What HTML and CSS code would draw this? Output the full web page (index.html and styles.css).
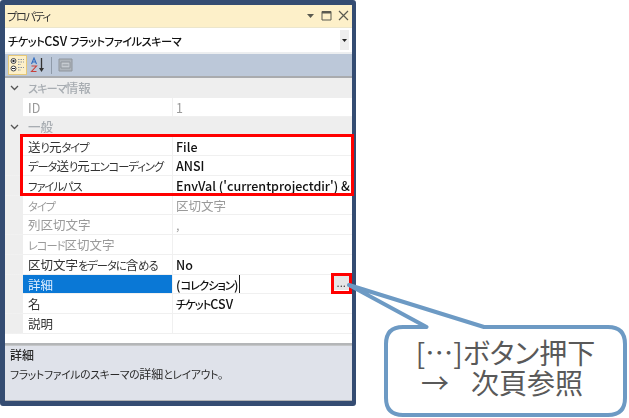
FILE: index.html
```html
<!DOCTYPE html>
<html lang="ja">
<head>
<meta charset="utf-8">
<title>プロパティ</title>
<link rel="stylesheet" href="styles.css">
</head>
<body>
<div class="stage">
  <div class="window">
    <div class="titlebar">
      <span class="title"><span class="k">プロパティ</span></span>
      <div class="title-icons">
        <svg width="9" height="6" viewBox="0 0 9 6"><path d="M1 1h7L4.500 5z" fill="#5a5a50"/></svg>
        <svg width="11" height="11" viewBox="0 0 11 11"><path d="M1 1.500h9v8.500H1z" fill="none" stroke="#5a5a50"/><path d="M1 2.500h9" stroke="#5a5a50" stroke-width="2"/></svg>
        <svg width="11" height="11" viewBox="0 0 11 11"><path d="M1 1l9 9M10 1l-9 9" stroke="#5a5a50" stroke-width="1.200"/></svg>
      </div>
    </div>
    <div class="objectbar">
      <span class="object-name"><span class="k">チケット</span>CSV <span class="k">フラットファイルスキーマ</span></span>
      <span class="object-arrow"><svg width="5" height="3" viewBox="0 0 5 3"><path d="M0 0h5L2.500 3z" fill="#222"/></svg></span>
    </div>
    <div class="toolbar">
      <span class="tool tool-on">
        <svg width="16" height="16" viewBox="0 0 16 16"><circle cx="3.500" cy="4" r="2.500" fill="#fff" stroke="#444"/><circle cx="3.500" cy="11.500" r="2.500" fill="#fff" stroke="#444"/><path d="M2 4h3M3.500 2.800v2.400M2 11.500h3" stroke="#222"/><path d="M8 2.500h6M8 5h6M8 7.500h3M8 10.500h6M8 13h3" stroke="#8a94a0" stroke-dasharray="1.500 1"/></svg>
      </span>
      <span class="tool">
        <svg width="16" height="16" viewBox="0 0 16 16"><path d="M1.500 7L4 1l2.500 6M2.500 5h3" fill="none" stroke="#2f6cc0" stroke-width="1.100"/><path d="M1.500 9h5l-5 5.500h5" fill="none" stroke="#c8403a" stroke-width="1.100"/><path d="M11.500 1v12" stroke="#333" stroke-width="1.300"/><path d="M9 11h5l-2.500 4z" fill="#333"/></svg>
      </span>
      <span class="tool-sep"></span>
      <span class="tool">
        <svg width="15" height="14" viewBox="0 0 15 14"><path d="M1 1h13v12H1z" fill="#aeb4bb" stroke="#8f959c"/><path d="M3 4h9v6H3z" fill="#c6cbd1" stroke="#8f959c"/><path d="M4.500 7h6" stroke="#8f959c"/></svg>
      </span>
    </div>
    <div class="grid">
      <div class="cat"><span class="chev"><svg width="9" height="6" viewBox="0 0 9 6"><path d="M1 1l3.500 3.500L8 1" fill="none" stroke="#555" stroke-width="1.300"/></svg></span><span class="cat-name"><span class="k">スキーマ</span>情報</span></div>
      <div class="row dim"><span class="key">ID</span><span class="val"><span>1</span></span></div>
      <div class="cat"><span class="chev"><svg width="9" height="6" viewBox="0 0 9 6"><path d="M1 1l3.500 3.500L8 1" fill="none" stroke="#555" stroke-width="1.300"/></svg></span><span class="cat-name">一般</span></div>
      <div class="row strong"><span class="key">送<span class="k">り</span>元<span class="k">タイプ</span></span><span class="val"><span>File</span></span></div>
      <div class="row strong"><span class="key"><span class="k">データ</span>送<span class="k">り</span>元<span class="k">エンコーディング</span></span><span class="val"><span>ANSI</span></span></div>
      <div class="row strong"><span class="key"><span class="k">ファイルパス</span></span><span class="val"><span>EnvVal ('currentprojectdir') &amp;</span></span></div>
      <div class="row dim"><span class="key"><span class="k">タイプ</span></span><span class="val"><span>区切文字</span></span></div>
      <div class="row dim"><span class="key">列区切文字</span><span class="val"><span>,</span></span></div>
      <div class="row dim"><span class="key"><span class="k">レコード</span>区切文字</span><span class="val"></span></div>
      <div class="row strong"><span class="key">区切文字<span class="k">をデータに</span>含<span class="k">める</span></span><span class="val"><span>No</span></span></div>
      <div class="row strong selected"><span class="key">詳細</span><span class="val"><span class="caret">(<span class="k">コレクション</span>)</span><span class="ellipsis">...</span></span></div>
      <div class="row strong"><span class="key">名</span><span class="val"><span><span class="k">チケット</span>CSV</span></span></div>
      <div class="row strong"><span class="key">説明</span><span class="val"></span></div>
      <div class="grid-fill"></div>
    </div>
    <div class="desc">
      <div class="desc-title">詳細</div>
      <div class="desc-text"><span class="k">フラットファイルのスキーマの</span>詳細<span class="k">とレイアウト。</span></div>
    </div>
  </div>
  <div class="mark mark-rows"></div>
  <div class="mark mark-btn"></div>
  <svg class="callout" width="629" height="418" viewBox="0 0 629 418">
    <path d="M349 285L426.500 327H403Q386 327 386 344V398Q386 415 403 415H608Q625 415 625 398V344Q625 327 608 327H484Z" fill="#fff" stroke="#6d9ac4" stroke-width="4" stroke-linejoin="round"/>
  </svg>
  <div class="callout-text">
    <div class="callout-line">[…]ボタン押下</div>
    <div class="callout-line callout-next"><span class="arrow">→</span><span>次頁参照</span></div>
  </div>
</div>
</body>
</html>
```
FILE: styles.css
```css
* { box-sizing: border-box; }
html, body { margin: 0; padding: 0; background: #fff; }
body { font-family: "Noto Sans CJK JP", "Open Sans", sans-serif; font-feature-settings: "palt"; }
.stage { position: relative; width: 629px; height: 418px; overflow: hidden; }
.k { font-size: 0.9em; letter-spacing: -1px; }
.window {
  width: 356px; height: 406px; margin: 0;
  border: solid #344c72; border-width: 5px 4px 5px 5px;
  border-radius: 3px;
  background: #fff; display: flex; flex-direction: column;
  filter: blur(0.3px);
}
.titlebar {
  height: 23px; flex: none; display: flex; align-items: center; justify-content: space-between;
  background: #fdf0c9; padding: 0 3px 1px 2px; border-bottom: 1px solid #ece6cc;
}
.title { font-size: 12.500px; color: #333; }
.title .k { letter-spacing: -1.500px; }
.title-icons { display: flex; align-items: center; gap: 6px; }
.objectbar {
  height: 26px; flex: none; display: flex; align-items: center; justify-content: space-between;
  background: #fff; padding: 2px 3px 2px 3px; border-bottom: 2px solid #eceef0;
}
.object-name { font-size: 12.500px; font-weight: 500; color: #111; }
.object-name .k { letter-spacing: -0.500px; }
.object-arrow { width: 9px; height: 20px; background: #eee; display: flex; align-items: center; justify-content: center; }
.toolbar {
  height: 24px; flex: none; display: flex; align-items: center; gap: 1px; padding-left: 3px;
  background: #bcc8d9; border-bottom: 2px solid #a9abae;
}
.tool { width: 19px; height: 20px; display: flex; align-items: center; justify-content: center; }
.tool-on { background: #fdf0c9; border: 1px solid #e6c878; }
.tool-sep { width: 1px; height: 17px; background: #8f9aa8; margin: 0 3px; }
.grid { flex: 1; display: flex; flex-direction: column; background: #fff; font-size: 12.500px; border-bottom: 2px solid #b4b6b8; }
.cat { height: 19.500px; flex: none; display: flex; align-items: center; background: #eeeeee; color: #a8adb2; }
.chev { width: 18px; display: flex; justify-content: center; flex: none; }
.cat-name { font-weight: 500; padding-left: 5px; }
.row {
  height: 19.700px; flex: none; display: flex; padding-left: 18px; background: linear-gradient(#eee, #eee) left / 18px 100% no-repeat;
  line-height: 20px;
}
.key { width: 150px; flex: none; padding-left: 5px; background: #fff; border-bottom: 1px solid #f0f0f0; border-right: 1px solid #f0f0f0; color: #333; white-space: nowrap; overflow: hidden; }
.val { flex: 1; min-width: 0; padding-left: 3px; border-bottom: 1px solid #f0f0f0; white-space: nowrap; overflow: hidden; display: flex; justify-content: space-between; }
.strong .val { font-weight: 500; color: #111; }
.dim .key, .dim .val { color: #9a9a9a; font-weight: 400; }
.selected .key { background: #0a78d6; color: #dfeeff; }
.caret { border-right: 1px solid #222; padding-right: 1px; height: 18px; line-height: 19px; }
.ellipsis { width: 15px; height: 14px; margin: 1px 3px 0 0; background: #e6e6e6; font-weight: 700; font-size: 8px; line-height: 16px; letter-spacing: 0.500px; text-align: center; color: #333; font-feature-settings: normal; }
.grid-fill { flex: 1; background: #fff; }
.desc { height: 56px; flex: none; background: #dfe2ea; padding: 0 5px; border-top: 1px solid #c4c6c8; border-bottom: 1px solid #b0b2b4; color: #2a2a2a; font-size: 12px; line-height: 18.500px; }
.desc-title { font-weight: 500; }
.desc .k { letter-spacing: -0.300px; }
.mark { position: absolute; border: 3px solid #f00; }
.mark-rows { left: 20px; top: 134px; width: 334px; height: 62px; }
.mark-btn { left: 331px; top: 273px; width: 21px; height: 21px; }
.callout { position: absolute; left: 0; top: 0; }
.callout-text { position: absolute; left: 386px; top: 338px; width: 239px; color: #595959; font-size: 28px; line-height: 29.500px; font-weight: 400; }
.callout-line { display: flex; justify-content: center; white-space: nowrap; }
.callout-next { justify-content: flex-start; padding-left: 35px; font-feature-settings: normal; }
.arrow { width: 50px; }
```
